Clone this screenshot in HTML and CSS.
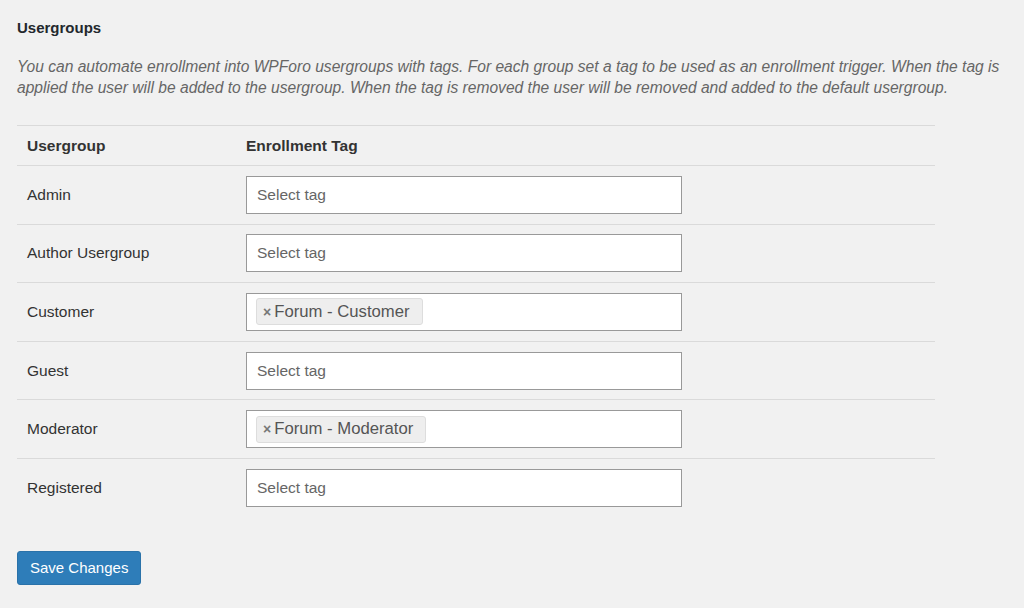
FILE: index.html
```html
<!DOCTYPE html>
<html>
<head>
<meta charset="utf-8">
<link rel="stylesheet" href="styles.css">
</head>
<body>
<div class="wrap">
  <h2 class="title">Usergroups</h2>
  <p class="desc">You can automate enrollment into WPForo usergroups with tags. For each group set a tag to be used as an enrollment trigger. When the tag is applied the user will be added to the usergroup. When the tag is removed the user will be removed and added to the default usergroup.</p>
  <table class="groups">
    <thead>
      <tr><th class="c1">Usergroup</th><th>Enrollment Tag</th></tr>
    </thead>
    <tbody>
      <tr><td class="c1">Admin</td><td><div class="sel"><span class="ph">Select tag</span></div></td></tr>
      <tr><td class="c1">Author Usergroup</td><td><div class="sel"><span class="ph">Select tag</span></div></td></tr>
      <tr><td class="c1">Customer</td><td><div class="sel"><span class="chip"><span class="x">×</span>Forum - Customer</span></div></td></tr>
      <tr><td class="c1">Guest</td><td><div class="sel"><span class="ph">Select tag</span></div></td></tr>
      <tr><td class="c1">Moderator</td><td><div class="sel"><span class="chip"><span class="x">×</span>Forum - Moderator</span></div></td></tr>
      <tr><td class="c1">Registered</td><td><div class="sel"><span class="ph">Select tag</span></div></td></tr>
    </tbody>
  </table>
  <button class="save">Save Changes</button>
</div>
</body>
</html>
```
FILE: styles.css
```css
html, body {
  margin: 0;
  padding: 0;
  background: #f1f1f1;
}
body {
  font-family: "Liberation Sans", Arial, sans-serif;
  color: #444;
}
.wrap {
  padding: 18px 17px 0 17px;
}
.title {
  margin: 0;
  font-size: 15px;
  line-height: 20px;
  font-weight: bold;
  color: #23282d;
}
.desc {
  margin: 18px 0 0 0;
  font-size: 15.6px;
  line-height: 21px;
  font-style: italic;
  color: #666;
}
.groups {
  margin-top: 27px;
  width: 918px;
  border-collapse: collapse;
  font-size: 15.5px;
}
.groups thead tr {
  border-top: 1px solid #dadada;
  border-bottom: 1px solid #dadada;
}
.groups tbody tr {
  border-bottom: 1px solid #dadada;
}
.groups tbody tr:last-child {
  border-bottom: none;
}
.groups th {
  text-align: left;
  font-weight: bold;
  color: #333;
  height: 39px;
  padding: 0 10px;
}
.groups td {
  height: 57.6px;
  padding: 0 10px;
  color: #333;
}
.groups .c1 {
  width: 199px;
}
.sel {
  width: 414px;
  height: 36px;
  background: #fff;
  border: 1px solid #999;
  display: flex;
  align-items: center;
  padding: 0 10px;
  box-sizing: content-box;
}
.ph {
  color: #666;
  font-size: 15.5px;
}
.chip {
  display: inline-flex;
  align-items: center;
  height: 25px;
  padding: 0 12px 0 6px;
  margin-left: -1px;
  background: #eeeeee;
  border: 1px solid #dddddd;
  border-radius: 3px;
  font-size: 16.7px;
  color: #555;
}
.x {
  font-size: 14px;
  font-weight: bold;
  color: #777;
  margin-right: 3px;
}
.save {
  margin-top: 34px;
  height: 34px;
  padding: 0 12px;
  background: #2e7db9;
  border: 1px solid #2a72a9;
  border-radius: 3px;
  color: #fff;
  font-family: "Liberation Sans", Arial, sans-serif;
  font-size: 15px;
}
```
